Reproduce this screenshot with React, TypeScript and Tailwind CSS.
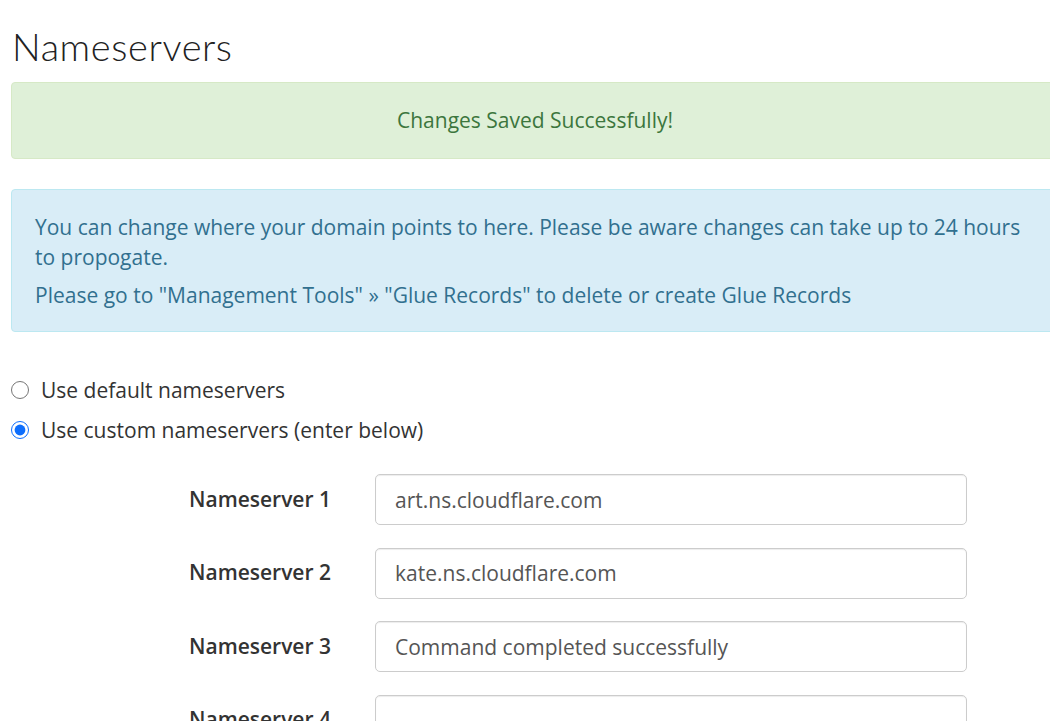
import { useState } from "react";

const servers = [
  { id: 1, value: "art.ns.cloudflare.com" },
  { id: 2, value: "kate.ns.cloudflare.com" },
  { id: 3, value: "Command completed successfully" },
  { id: 4, value: "" },
  { id: 5, value: "" },
];

export default function App() {
  const [mode, setMode] = useState<"default" | "custom">("custom");

  return (
    <div className="h-[721px] w-[1050px] overflow-hidden bg-white font-['Open_Sans',sans-serif] text-[#333]">
      <div className="w-[1059px] pl-[11px]">
        <h1 className="pt-[24px] pl-px font-['Lato',sans-serif] text-[38px] font-light leading-[44px] tracking-[0.6px] text-[#222]">
          Nameservers
        </h1>

        <div className="mt-[14px] flex h-[77px] items-center justify-center rounded-[4px] border border-[#d6e9c6] bg-[#dff0d8] text-[21px] text-[#3c763d]">
          Changes Saved Successfully!
        </div>

        <div className="mt-[30px] rounded-[4px] border border-[#bce8f1] bg-[#d9edf7] px-[23px] pt-[22px] pb-[21px] text-[21px] leading-[30px] text-[#31708f]">
          <p>
            You can change where your domain points to here. Please be aware changes can take up to 24 hours
            to propogate.
          </p>
          <p className="mt-[8px]">
            Please go to "Management Tools" » "Glue Records" to delete or create Glue Records
          </p>
        </div>

        <div className="mt-[44px] flex flex-col gap-[12px] text-[21px] leading-[28px]">
          <label className="flex items-center gap-[12px]">
            <input
              type="radio"
              name="ns"
              checked={mode === "default"}
              onChange={() => setMode("default")}
              className="m-0 h-[18px] w-[18px] accent-[#0d6efd]"
            />
            Use default nameservers
          </label>
          <label className="flex items-center gap-[12px]">
            <input
              type="radio"
              name="ns"
              checked={mode === "custom"}
              onChange={() => setMode("custom")}
              className="m-0 h-[18px] w-[18px] accent-[#0d6efd]"
            />
            Use custom nameservers (enter below)
          </label>
        </div>

        <div className="mt-[30px] flex flex-col gap-[22.5px]">
          {servers.map((s) => (
            <div key={s.id} className="flex items-center">
              <div className="w-[364px] pl-[178px] text-[21px] font-semibold text-[#333]">
                Nameserver {s.id}
              </div>
              <input
                type="text"
                defaultValue={s.value}
                className="h-[51px] w-[592px] rounded-[5px] border border-[#ccc] bg-white px-[19px] text-[21px] text-[#555] shadow-[inset_0_1px_1px_rgba(0,0,0,0.075)] outline-none"
              />
            </div>
          ))}
        </div>
      </div>
    </div>
  );
}
